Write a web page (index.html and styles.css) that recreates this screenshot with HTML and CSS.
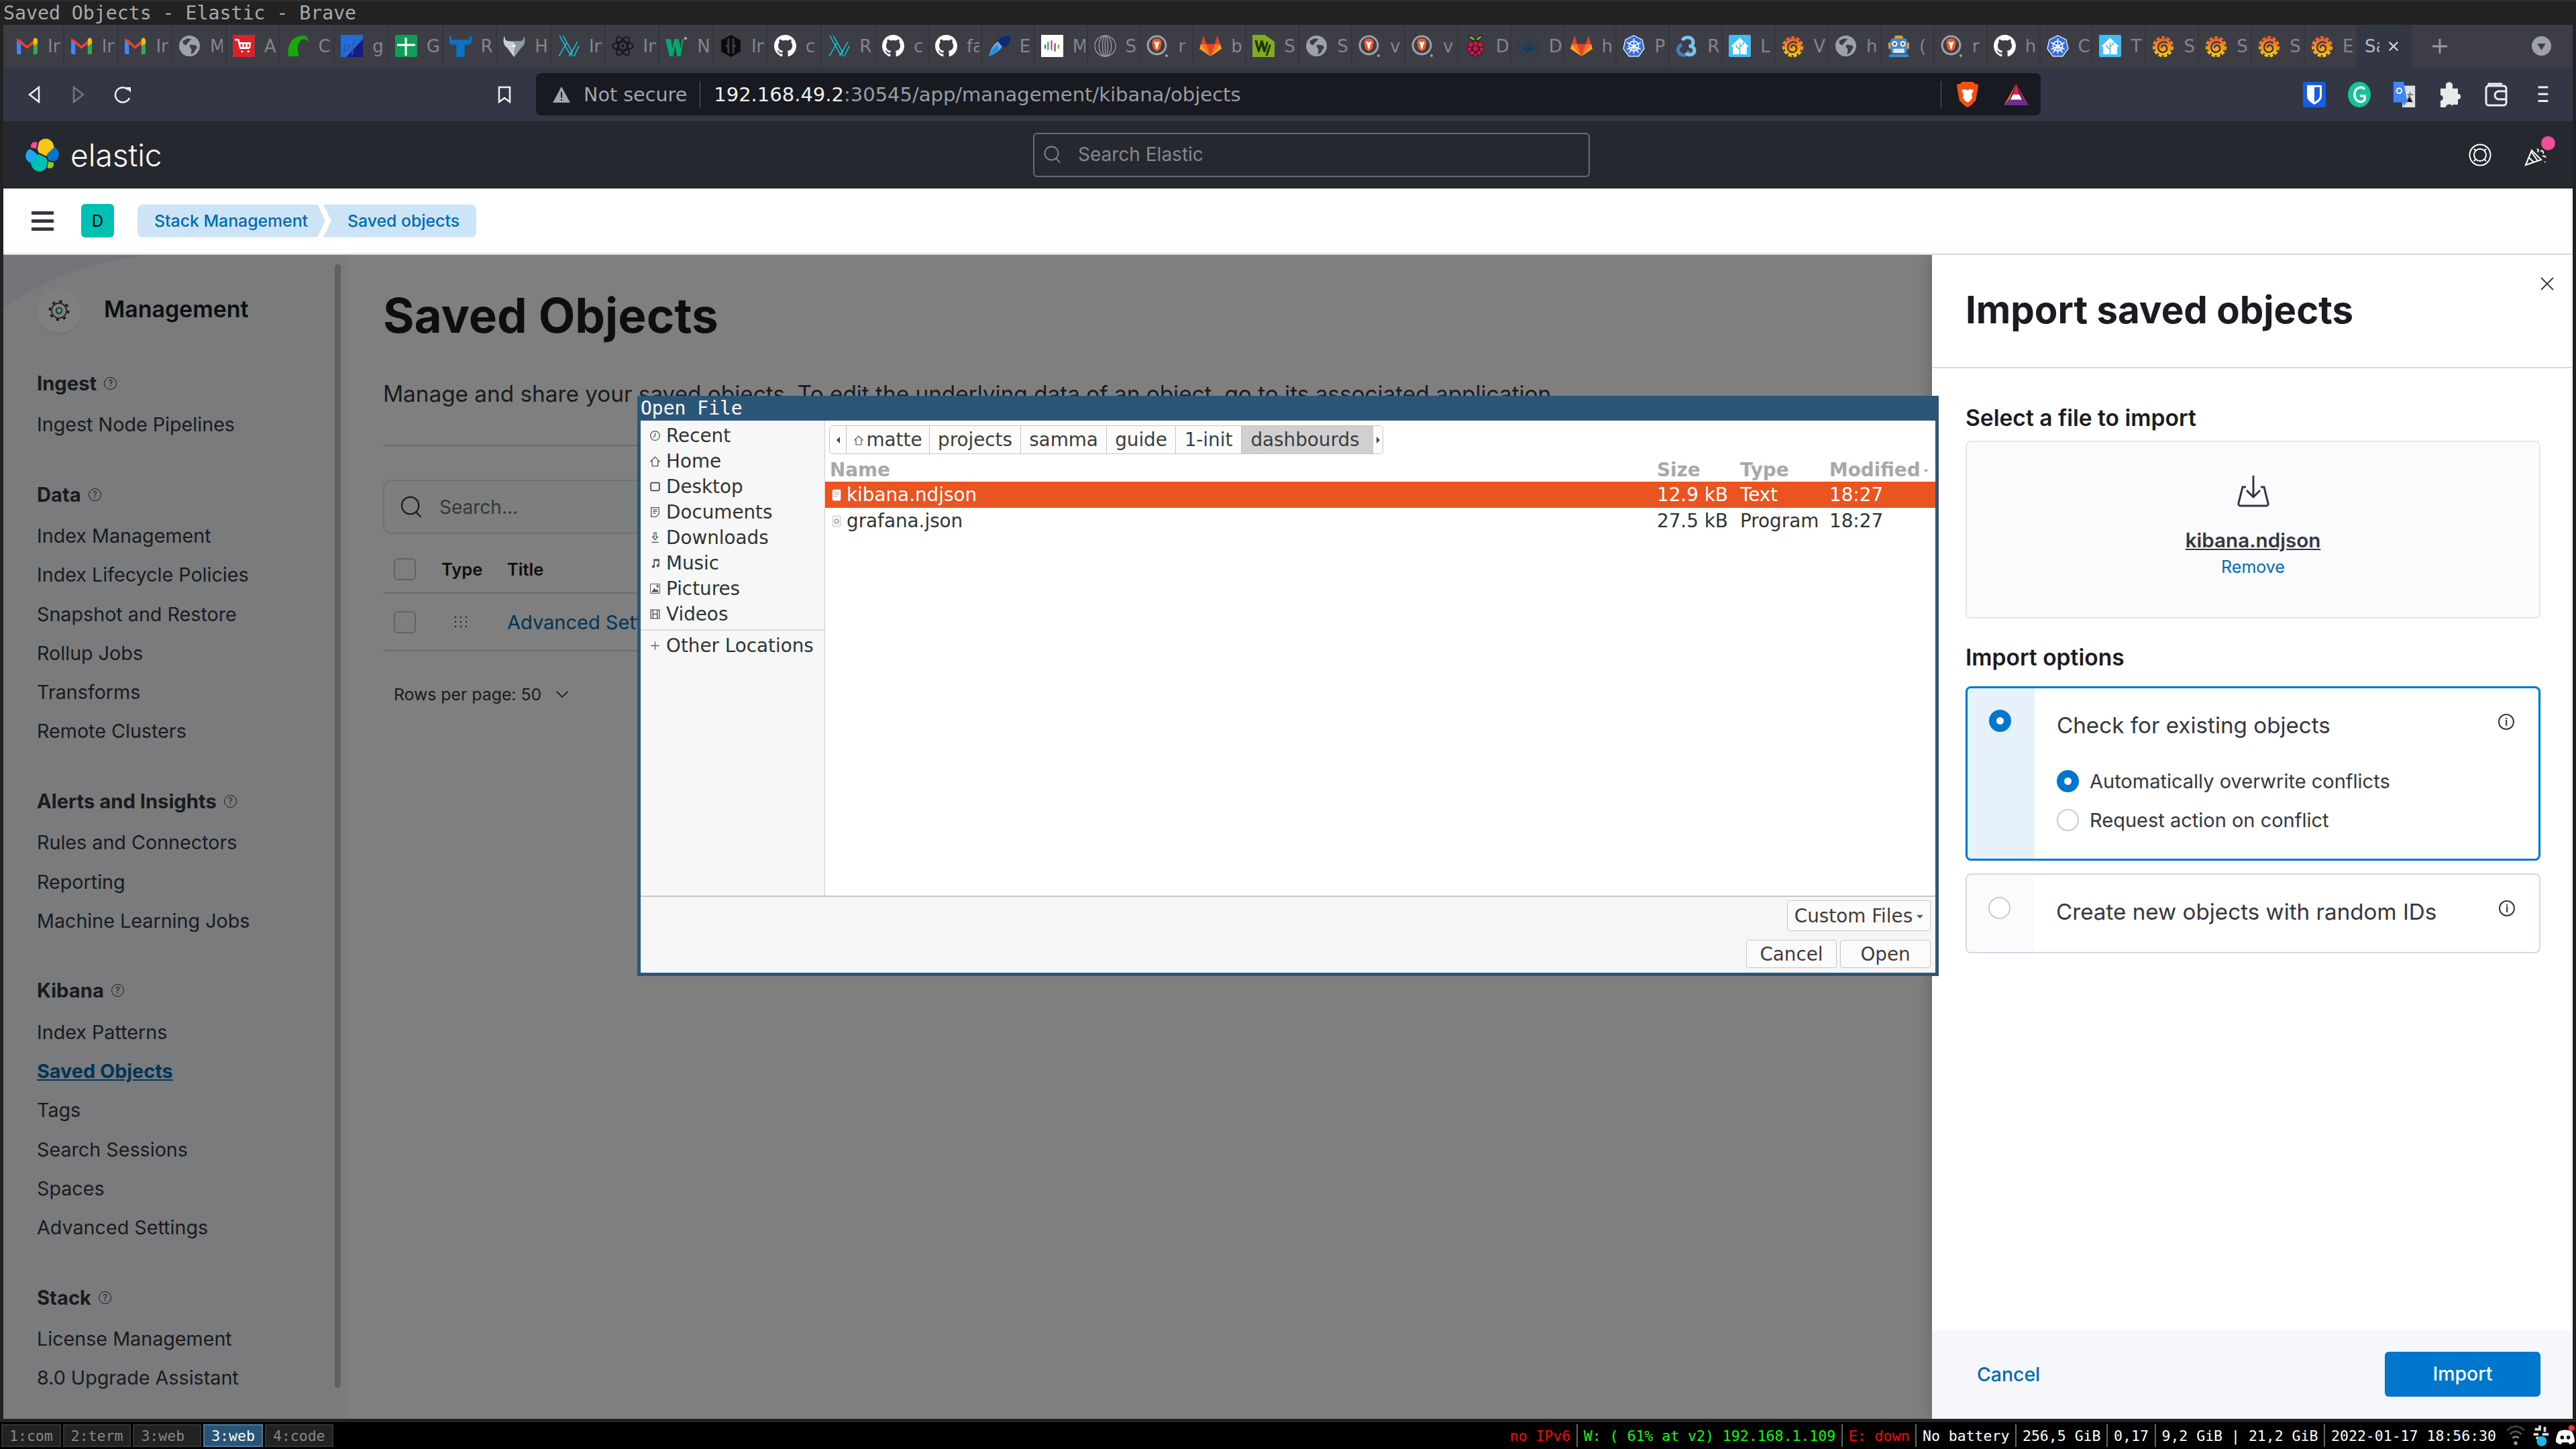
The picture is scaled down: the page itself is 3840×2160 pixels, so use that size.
FILE: index.html
```html
<!DOCTYPE html>
<html lang="en">
<head>
    <meta charset="UTF-8">
    <title>Saved Objects - Elastic - Brave</title>
    <link rel="stylesheet" href="styles.css">
</head>
<body>
<svg class="sprite" xmlns="http://www.w3.org/2000/svg">
    <defs>
        <linearGradient id="grafanaFill" x1="0" y1="0" x2="0" y2="1">
            <stop offset="0" stop-color="#f05a28"/>
            <stop offset="1" stop-color="#fbca0a"/>
        </linearGradient>
    </defs>
    <symbol id="gmail" viewBox="0 0 32 32">
        <path fill="#4285f4" d="M1 8h6v20H3a2 2 0 0 1-2-2z"/>
        <path fill="#34a853" d="M25 8h6v18a2 2 0 0 1-2 2h-4z"/>
        <path fill="#ea4335" d="M1 5l6 3 9 8 9-8 3-4-3 9-9 7-9-7-6-5z"/>
        <path fill="#fbbc04" d="M25 6c2-3 6-2 6 2v4l-6 4z"/>
    </symbol>
    <symbol id="globe" viewBox="0 0 32 32">
        <circle cx="16" cy="16" r="15" fill="#9ea1a8"/>
        <path fill="#3c3d45" d="M6 9l7-4 6 1-5 5-3 4-4-2zM17 14l8 1 2 3-5 8-4 2 1-7-3-4z"/>
    </symbol>
    <symbol id="cart" viewBox="0 0 32 32">
        <rect width="32" height="32" fill="#d8232a"/>
        <path fill="none" stroke="#fff" stroke-width="2.5" d="M3 7h5l3 12h13M9 12h16l-1 7M12 24h3M21 24h3M15 12v7M20 12v7"/>
    </symbol>
    <symbol id="cres" viewBox="0 0 32 32">
        <path fill="#16a80c" d="M3 31C0 15 9 1 24 1c5 0 7 3 8 9-5-5-9-5-12-1-5 6-4 14-2 22z"/>
    </symbol>
    <symbol id="pf" viewBox="0 0 32 32">
        <rect width="32" height="32" fill="#1a1a7e"/>
        <path fill="#1f6fd6" d="M0 0h32v6L8 32H0z"/>
        <text x="3" y="24" font-family="Liberation Serif" font-style="italic" font-size="24" fill="#3a4fb8">pf</text>
    </symbol>
    <symbol id="sheets" viewBox="0 0 32 32">
        <rect width="32" height="32" rx="2" fill="#0f9d58"/>
        <path fill="#fff" d="M14 4h3v9h12v3H17v14h-3V16H3v-3h11z"/>
    </symbol>
    <symbol id="tbar" viewBox="0 0 32 32">
        <path fill="#0d72c2" d="M0 2h3v5h26V2h3v9l-3 3h-7v18H10V14H3l-3-3z"/>
    </symbol>
    <symbol id="wolf" viewBox="0 0 32 32">
        <path fill="#8f9aa0" d="M2 1c0 6 2 8 6 8h16c4 0 6-2 6-8 2 6 2 11-1 15l-3 3-10 13-10-13-3-3C0 12 0 7 2 1z"/>
        <path fill="#c8d0d4" d="M2 1c0 6 2 8 6 8l8 2v21L6 19l-3-3C0 12 0 7 2 1z"/>
        <circle cx="16" cy="16" r="2" fill="#fff"/>
    </symbol>
    <symbol id="kong" viewBox="0 0 32 32">
        <path fill="none" stroke="#16c4d8" stroke-width="1.5" d="M3 1l15 27M8 1l14 25M13 12l-11 19M29 10L17 31M31 16l-7 15M22 31l-3-6"/>
    </symbol>
    <symbol id="atom" viewBox="0 0 32 32">
        <g fill="none" stroke="#0f0f12" stroke-width="1.5">
            <ellipse cx="16" cy="16" rx="15" ry="6"/>
            <ellipse cx="16" cy="16" rx="15" ry="6" transform="rotate(60 16 16)"/>
            <ellipse cx="16" cy="16" rx="15" ry="6" transform="rotate(120 16 16)"/>
        </g>
        <circle cx="16" cy="16" r="2" fill="#0f0f12"/>
    </symbol>
    <symbol id="w3" viewBox="0 0 32 32">
        <path fill="#04aa6d" d="M0 6h8l2 14 3-14h6l3 14 2-14h2l-4 25h-5l-3-15-3 15H6z"/>
        <circle cx="29" cy="5" r="2" fill="#a8adb3"/>
    </symbol>
    <symbol id="hashi" viewBox="0 0 32 32">
        <path fill="#0b0b0e" d="M16 0l14 8v16l-14 8-14-8V8z"/>
        <path fill="#3c3d45" d="M11 6l3-2v24l-3-2v-8H9v-4h2zM18 4l3 2v8h2v4h-2v8l-3 2z"/>
    </symbol>
    <symbol id="github" viewBox="0 0 16 16">
        <path fill="#fff" d="M8 0C3.58 0 0 3.58 0 8c0 3.54 2.29 6.53 5.47 7.59.4.07.55-.17.55-.38 0-.19-.01-.82-.01-1.49-2.01.37-2.53-.49-2.69-.94-.09-.23-.48-.94-.82-1.13-.28-.15-.68-.52-.01-.53.63-.01 1.08.58 1.23.82.72 1.21 1.87.87 2.33.66.07-.52.28-.87.51-1.07-1.78-.2-3.64-.89-3.64-3.95 0-.87.31-1.59.82-2.15-.08-.2-.36-1.02.08-2.12 0 0 .67-.21 2.2.82.64-.18 1.32-.27 2-.27.68 0 1.36.09 2 .27 1.53-1.04 2.2-.82 2.2-.82.44 1.1.16 1.92.08 2.12.51.56.82 1.27.82 2.15 0 3.07-1.87 3.75-3.65 3.95.29.25.54.73.54 1.48 0 1.07-.01 1.93-.01 2.2 0 .21.15.46.55.38A8.013 8.013 0 0016 8c0-4.42-3.58-8-8-8z"/>
    </symbol>
    <symbol id="swoosh" viewBox="0 0 32 32">
        <path fill="#0b2a78" d="M31 1c-12 0-22 8-24 22 7-9 14-8 18-5 6-5 8-11 6-17z"/>
        <path fill="#7aa6e0" d="M15 9C7 14 3 22 1 31c8-3 16-8 19-14-2-3-5-5-5-8z"/>
        <path fill="#1c8fe0" d="M14 14C8 17 3 24 1 31c6-2 13-7 15-11-1-2-2-4-2-6z"/>
    </symbol>
    <symbol id="jipl" viewBox="0 0 32 32">
        <rect width="32" height="32" fill="#fff"/>
        <path fill="#2c5fb8" d="M5 14h2v6H5z"/>
        <path fill="#20a84a" d="M9 10h2v12H9z"/>
        <path fill="#d62d7e" d="M14 8h2v14h-2z"/>
        <path fill="#6b3fa0" d="M19 12h2v12h-2z"/>
        <path fill="#7ab800" d="M24 14h2v6h-2z"/>
    </symbol>
    <symbol id="coil" viewBox="0 0 32 32">
        <g fill="none" stroke="#9ea1a8" stroke-width="1.2">
            <circle cx="16" cy="16" r="15"/>
            <ellipse cx="16" cy="16" rx="9" ry="15"/>
            <ellipse cx="16" cy="16" rx="4" ry="15"/>
            <path d="M16 1v30"/>
        </g>
    </symbol>
    <symbol id="brave" viewBox="0 0 32 32">
        <circle cx="15" cy="15" r="13" fill="none" stroke="#9ea1a8" stroke-width="3"/>
        <path fill="#ef5a2b" d="M15 5l5 1 2 5-2 9-5 4-5-4-2-9 2-5z"/>
        <path fill="#fff" d="M11 10h3l1 2 1-2h3l-2 5-1 5h-2l-1-5z"/>
        <circle cx="29" cy="30" r="2" fill="#9ea1a8"/>
    </symbol>
    <symbol id="gitlab" viewBox="0 0 32 32">
        <path fill="#e24329" d="M16 31L10 13h12z"/>
        <path fill="#fc6d26" d="M16 31L2 13h8zM16 31l14-18h-8z"/>
        <path fill="#fca326" d="M2 13l-2 7 16 11zM30 13l2 7-16 11z"/>
        <path fill="#e24329" d="M2 13L6 1l4 12zM30 13L26 1l-4 12z"/>
    </symbol>
    <symbol id="wh" viewBox="0 0 32 32">
        <path fill="#7fae1c" d="M0 0h18l14 10v22H0z"/>
        <path fill="#26300a" d="M3 8h4l2 10 3-10h3l3 10 2-8h3l-4 15h-3l-3-9-3 9H8zM24 14h3l-5 16h-3z"/>
    </symbol>
    <symbol id="rasp" viewBox="0 0 32 32">
        <path fill="#75a928" stroke="#111" d="M16 9C10 8 7 5 6 1c5 0 9 2 10 8zM16 9c6-1 9-4 10-8-5 0-9 2-10 8z"/>
        <g fill="#c51a4a" stroke="#111" stroke-width=".8">
            <circle cx="16" cy="13" r="4"/><circle cx="9" cy="14" r="4"/><circle cx="23" cy="14" r="4"/>
            <circle cx="7" cy="21" r="3.5"/><circle cx="25" cy="21" r="3.5"/><circle cx="16" cy="20" r="4"/>
            <circle cx="11" cy="26" r="3.5"/><circle cx="21" cy="26" r="3.5"/><circle cx="16" cy="29" r="2.5"/>
        </g>
    </symbol>
    <symbol id="docker" viewBox="0 0 32 32">
        <circle cx="16" cy="16" r="15" fill="none" stroke="#14405f" stroke-width="1"/>
        <path fill="#14405f" d="M6 17h18c2 0 2-3 4-3-1 7-6 11-12 11-5 0-9-3-10-8zM10 13h3v3h-3zM14 13h3v3h-3zM18 13h3v3h-3zM14 9h3v3h-3zM18 5h-1v3h3z"/>
    </symbol>
    <symbol id="k8s" viewBox="0 0 32 32">
        <path fill="#326ce5" stroke="#fff" stroke-width="1.2" d="M16 1l12 6 3 13-8 11H9L1 20 4 7z"/>
        <g fill="none" stroke="#fff" stroke-width="1.6">
            <circle cx="16" cy="16" r="7"/>
            <path d="M16 5v22M6 11l20 10M26 11L6 21M9 26l7-10 7 10"/>
        </g>
    </symbol>
    <symbol id="ring" viewBox="0 0 32 32">
        <g fill="none" stroke-width="5">
            <path stroke="#7ac4ee" d="M10 8c2-6 13-6 15 1 1 4-2 7-6 8"/>
            <path stroke="#3f7fbf" d="M9 14c-6 2-8 10-2 14 5 3 11 0 12-5"/>
            <path stroke="#7ac4ee" d="M21 16c6 1 8 8 4 11-3 3-8 2-10-1"/>
        </g>
    </symbol>
    <symbol id="home" viewBox="0 0 32 32">
        <rect width="32" height="32" rx="2" fill="#41bdf5"/>
        <path fill="#fff" d="M16 4l13 13h-3v11H6V17H3z"/>
        <path fill="none" stroke="#41bdf5" stroke-width="1.5" d="M16 28V11M16 21l-5-4v-3M16 17l5-4v-3"/>
    </symbol>
    <symbol id="grafana" viewBox="0 0 32 32">
        <circle cx="16" cy="17" r="12" fill="url(#grafanaFill)"/>
        <circle cx="16" cy="17" r="13.5" fill="none" stroke="url(#grafanaFill)" stroke-width="3.4" stroke-dasharray="5 2.6"/>
        <path fill="none" stroke="#3c3d45" stroke-width="2.4" d="M22 12c-5-4-12-1-13 5-1 6 5 10 10 7 4-2 3-8-1-9-3-1-5 2-4 4"/>
    </symbol>
    <symbol id="robot" viewBox="0 0 32 32">
        <path fill="#f79b12" d="M11 1h10l2 5H9z"/>
        <rect x="4" y="5" width="24" height="22" rx="4" fill="#3c8dc9"/>
        <rect x="1" y="11" width="3" height="9" fill="#f79b12"/>
        <rect x="28" y="11" width="3" height="9" fill="#f79b12"/>
        <circle cx="10" cy="13" r="4" fill="#fff"/><circle cx="22" cy="13" r="4" fill="#fff"/>
        <circle cx="10" cy="13" r="2" fill="#e0283a"/><circle cx="22" cy="13" r="2" fill="#e0283a"/>
        <rect x="8" y="20" width="16" height="6" fill="#dfe6ea"/>
        <path fill="#3c8dc9" d="M2 28h28v4H2z"/>
    </symbol>
    <symbol id="icoRecent" viewBox="0 0 16 16"><circle cx="8" cy="8" r="6.5" fill="none" stroke="#555" stroke-width="1.2"/><path fill="none" stroke="#555" stroke-width="1.2" d="M8 4v4.5l-3 2"/></symbol>
    <symbol id="icoHome" viewBox="0 0 16 16"><path fill="none" stroke="#555" stroke-width="1.2" d="M2 8l6-6 6 6h-2v7H4V8z"/></symbol>
    <symbol id="icoDesk" viewBox="0 0 16 16"><rect x="2" y="2.5" width="12" height="11" rx="1.5" fill="none" stroke="#444" stroke-width="1.6"/></symbol>
    <symbol id="icoDocs" viewBox="0 0 16 16"><path fill="none" stroke="#555" stroke-width="1.2" d="M2.5 1.5h11v9l-4 4h-7zM5 4.5h6M5 7h6M5 9.5h4"/></symbol>
    <symbol id="icoDown" viewBox="0 0 16 16"><path fill="none" stroke="#555" stroke-width="1.2" d="M6.5 1h3v6h2l-3.5 4L4.500 7h2zM3 14.500h10"/></symbol>
    <symbol id="icoMusic" viewBox="0 0 16 16"><path fill="#555" d="M6 2h8v9.500a2 2 0 1 1-1.500-2V5H7.500v8a2 2 0 1 1-1.500-2z"/></symbol>
    <symbol id="icoPic" viewBox="0 0 16 16"><rect x="1.500" y="1.500" width="13" height="13" fill="#fff" stroke="#555"/><path fill="#555" d="M3 13l4-6 2.500 3 1.500-1.500 2 4.500zM10 3h3v3h-3z"/></symbol>
    <symbol id="icoFilm" viewBox="0 0 16 16"><path fill="none" stroke="#555" stroke-width="1.3" d="M2 2h12v12H2zM5 2v12M11 2v12M5 8h6"/></symbol>
    <symbol id="icoPlus" viewBox="0 0 16 16"><path stroke="#666" stroke-width="1.2" d="M8 2v12M2 8h12"/></symbol>
</svg>

<div class="titlebar">Saved Objects - Elastic - Brave</div>

<div class="browser">
    <div class="tabstrip">
        <div class="tab wide"><svg class="fav"><use href="#gmail"/></svg><span class="tab-label">Inbox</span></div>
        <div class="tab wide"><svg class="fav"><use href="#gmail"/></svg><span class="tab-label">Inbox</span></div>
        <div class="tab wide"><svg class="fav"><use href="#gmail"/></svg><span class="tab-label">Inbox</span></div>
        <div class="tab wide"><svg class="fav"><use href="#globe"/></svg><span class="tab-label">M</span></div>
        <div class="tab wide"><svg class="fav"><use href="#cart"/></svg><span class="tab-label">A</span></div>
        <div class="tab wide"><svg class="fav"><use href="#cres"/></svg><span class="tab-label">C</span></div>
        <div class="tab wide"><svg class="fav"><use href="#pf"/></svg><span class="tab-label">g</span></div>
        <div class="tab wide"><svg class="fav"><use href="#sheets"/></svg><span class="tab-label">G</span></div>
        <div class="tab wide"><svg class="fav"><use href="#tbar"/></svg><span class="tab-label">R</span></div>
        <div class="tab wide"><svg class="fav"><use href="#wolf"/></svg><span class="tab-label">H</span></div>
        <div class="tab wide"><svg class="fav"><use href="#kong"/></svg><span class="tab-label">Inbox</span></div>
        <div class="tab wide"><svg class="fav"><use href="#atom"/></svg><span class="tab-label">Inbox</span></div>
        <div class="tab wide"><svg class="fav"><use href="#w3"/></svg><span class="tab-label">N</span></div>
        <div class="tab wide"><svg class="fav"><use href="#hashi"/></svg><span class="tab-label">Inbox</span></div>
        <div class="tab wide"><svg class="fav"><use href="#github"/></svg><span class="tab-label">c</span></div>
        <div class="tab wide"><svg class="fav"><use href="#kong"/></svg><span class="tab-label">R</span></div>
        <div class="tab"><svg class="fav"><use href="#github"/></svg><span class="tab-label">c</span></div>
        <div class="tab"><svg class="fav"><use href="#github"/></svg><span class="tab-label">fa</span></div>
        <div class="tab"><svg class="fav"><use href="#swoosh"/></svg><span class="tab-label">E</span></div>
        <div class="tab"><svg class="fav"><use href="#jipl"/></svg><span class="tab-label">M</span></div>
        <div class="tab"><svg class="fav"><use href="#coil"/></svg><span class="tab-label">S</span></div>
        <div class="tab"><svg class="fav"><use href="#brave"/></svg><span class="tab-label">r</span></div>
        <div class="tab"><svg class="fav"><use href="#gitlab"/></svg><span class="tab-label">b</span></div>
        <div class="tab"><svg class="fav"><use href="#wh"/></svg><span class="tab-label">S</span></div>
        <div class="tab"><svg class="fav"><use href="#globe"/></svg><span class="tab-label">S</span></div>
        <div class="tab"><svg class="fav"><use href="#brave"/></svg><span class="tab-label">v</span></div>
        <div class="tab"><svg class="fav"><use href="#brave"/></svg><span class="tab-label">v</span></div>
        <div class="tab"><svg class="fav"><use href="#rasp"/></svg><span class="tab-label">D</span></div>
        <div class="tab"><svg class="fav"><use href="#docker"/></svg><span class="tab-label">D</span></div>
        <div class="tab"><svg class="fav"><use href="#gitlab"/></svg><span class="tab-label">h</span></div>
        <div class="tab"><svg class="fav"><use href="#k8s"/></svg><span class="tab-label">P</span></div>
        <div class="tab"><svg class="fav"><use href="#ring"/></svg><span class="tab-label">R</span></div>
        <div class="tab"><svg class="fav"><use href="#home"/></svg><span class="tab-label">L</span></div>
        <div class="tab"><svg class="fav"><use href="#grafana"/></svg><span class="tab-label">V</span></div>
        <div class="tab"><svg class="fav"><use href="#globe"/></svg><span class="tab-label">h</span></div>
        <div class="tab"><svg class="fav"><use href="#robot"/></svg><span class="tab-label">(</span></div>
        <div class="tab"><svg class="fav"><use href="#brave"/></svg><span class="tab-label">r</span></div>
        <div class="tab"><svg class="fav"><use href="#github"/></svg><span class="tab-label">h</span></div>
        <div class="tab"><svg class="fav"><use href="#k8s"/></svg><span class="tab-label">C</span></div>
        <div class="tab"><svg class="fav"><use href="#home"/></svg><span class="tab-label">T</span></div>
        <div class="tab"><svg class="fav"><use href="#grafana"/></svg><span class="tab-label">S</span></div>
        <div class="tab"><svg class="fav"><use href="#grafana"/></svg><span class="tab-label">S</span></div>
        <div class="tab"><svg class="fav"><use href="#grafana"/></svg><span class="tab-label">S</span></div>
        <div class="tab"><svg class="fav"><use href="#grafana"/></svg><span class="tab-label">E</span></div>
        <div class="tab-active">
            <span class="tab-label-active">Saved</span>
            <svg class="tab-close" viewBox="0 0 20 20"><path d="M3 3l14 14M17 3L3 17"/></svg>
        </div>
        <svg class="tab-plus" viewBox="0 0 26 26"><path d="M13 1v24M1 13h24"/></svg>
        <svg class="tab-menu" viewBox="0 0 32 32"><circle cx="16" cy="16" r="16" fill="#9ea1a8"/><path fill="#3c3d45" d="M9 12h14l-7 11z"/></svg>
    </div>

    <div class="toolbar">
        <svg class="tb-back" viewBox="0 0 18 26"><path d="M16 2v22L2 13z"/></svg>
        <svg class="tb-fwd" viewBox="0 0 18 26"><path d="M2 2v22l14-11z"/></svg>
        <svg class="tb-reload" viewBox="0 0 28 26"><path d="M22 6a11 11 0 1 0 2 12"/><path class="solid" d="M18 2h8v8z"/></svg>
        <svg class="tb-mark" viewBox="0 0 20 26"><path d="M2 2h16v22l-8-6-8 6z"/></svg>
        <div class="address">
            <svg class="warn" viewBox="0 0 26 24"><path fill="#a2a4ab" d="M13 0l13 24H0z"/><path fill="#181a21" d="M12 8h2v9h-2zM12 19h2v2h-2z"/></svg>
            <span class="not-secure">Not secure</span>
            <span class="addr-sep"></span>
            <span class="url"><span class="url-host">192.168.49.2</span>:30545/app/management/kibana/objects</span>
            <span class="addr-sep addr-sep-right"></span>
            <svg class="lion" viewBox="0 0 34 38"><path fill="#f1500f" d="M9 0h16l3 3 5 1-1 9-3 15-8 8-4 2-4-2-8-8L2 13 1 4l5-1z"/><path fill="#fff" d="M8 12l6-1 3 2 3-2 6 1-3 7 1 5-5 6h-4l-5-6 1-5z"/></svg>
            <svg class="rewards" viewBox="0 0 38 54" preserveAspectRatio="none"><path fill="#e0224a" d="M19 0l-5 27h10z"/><path fill="#9b2a7a" d="M19 0l19 54-9-14z"/><path fill="#ef5a2b" d="M19 0L0 54l9-14z"/><path fill="#fff" d="M14 27h10l4 13H10z"/><path fill="#6e2d96" d="M10 40h18l10 14H0z"/></svg>
        </div>
        <div class="tb-right">
            <svg class="ext" viewBox="0 0 34 38"><rect width="34" height="38" rx="3" fill="#175ddc"/><path fill="#fff" d="M6 5h22v16c0 6-6 10-11 13C12 31 6 27 6 21z"/><path fill="#175ddc" d="M17 8h8v13c0 4-4 7-8 9z"/></svg>
            <svg class="ext" viewBox="0 0 34 38"><ellipse cx="17" cy="19" rx="17" ry="19" fill="#15c39a"/><path fill="none" stroke="#fff" stroke-width="3.500" d="M25 11c-5-5-15-3-15 8s10 13 15 8v-6h-7"/></svg>
            <svg class="ext" viewBox="0 0 34 40"><rect x="14" y="6" width="20" height="34" fill="#dfe1e5"/><path fill="#4285f4" d="M0 0h16l6 32H0z"/><path fill="#4285f4" d="M14 30h8l-6 8z"/><circle cx="9" cy="14" r="4" fill="none" stroke="#fff" stroke-width="2"/><path stroke="#777" stroke-width="2" d="M22 20h9M26 16v3M30 32l-5-10-4 9"/></svg>
            <svg class="ext" viewBox="0 0 34 38"><path fill="#eaeaea" d="M12 5c0-6 10-6 10 0v5h8v8c6 0 6 8 0 8v8H22v4c0-6-10-6-10 0H4V28c5 0 5-8 0-8V10h8z"/></svg>
            <svg class="ext ext-line" viewBox="0 0 34 38"><rect x="2" y="6" width="30" height="29" rx="4"/><path d="M5 6l1-3h20M32 14H21a4 4 0 0 0 0 12h11"/></svg>
            <svg class="ext ext-menu" viewBox="0 0 24 38"><path d="M2 4h20M2 18h20M2 32h20"/></svg>
        </div>
    </div>

    <div class="kbn-head">
        <svg class="elastic-logo" viewBox="0.5 1.2 31.5 30" preserveAspectRatio="none">
            <path fill="#FEC514" d="M13.032 14.1l7.005 3.192 7.067-6.192a7.89 7.89 0 00.157-1.562c0-4.33-3.523-7.854-7.853-7.854-2.591 0-5.008 1.277-6.476 3.418l-1.176 6.1 1.276 2.898z"/>
            <path fill="#00BFB3" d="M5.78 21.527a7.976 7.976 0 00-.16 1.578c0 4.34 3.531 7.872 7.872 7.872 2.61 0 5.035-1.288 6.5-3.446l1.165-6.08-1.556-2.976-7.034-3.205-6.787 6.257z"/>
            <path fill="#F04E98" d="M5.737 9.535l4.802 1.135 1.051-5.457A3.79 3.79 0 009.32 4.453 3.794 3.794 0 005.53 8.245c0 .45.073.89.207 1.29z"/>
            <path fill="#1BA9F5" d="M5.32 10.68C2.61 11.575.717 14.17.717 17.022c0 2.77 1.715 5.245 4.285 6.22l6.737-6.09-1.237-2.64-6.182-3.832z"/>
            <path fill="#93C90E" d="M20.98 27.44a3.78 3.78 0 002.27.76 3.795 3.795 0 003.79-3.79c0-.45-.077-.89-.21-1.29l-4.797-1.122-1.053 5.442z"/>
            <path fill="#0077CC" d="M21.958 20.7l5.28 1.236c2.71-.897 4.603-3.49 4.603-6.347 0-2.763-1.71-5.235-4.281-6.223l-6.906 6.051 1.304 5.283z"/>
        </svg>
        <span class="elastic-word">elastic</span>
        <div class="global-search">
            <svg class="search-ico" viewBox="0 0 26 26"><circle cx="11.500" cy="11.500" r="10"/><path d="M18 19l6 6"/></svg>
            <span>Search Elastic</span>
        </div>
        <div class="head-right">
            <svg class="head-ico" viewBox="0 0 36 36"><circle cx="18" cy="18" r="15.500"/><circle cx="18" cy="18" r="9"/><path d="M9 9l3 3M27 9l-3 3M9 27l3-3M27 27l-3-3"/></svg>
            <div class="news">
                <svg class="head-ico" viewBox="0 0 36 36"><path d="M2 33l9-22 14 14zM7 22l7 7M11 14l9 13M24 12c3-1 5 1 4 4M19 9c2 1 2 3 1 5M27 20c2-1 4 0 5 2M30 29l1-1"/></svg>
                <span class="news-dot"></span>
            </div>
        </div>
    </div>

    <div class="kbn-nav">
        <div class="burger"><span></span><span></span><span></span></div>
        <div class="space-badge">D</div>
        <div class="crumbs">
            <span class="crumb crumb-first">Stack Management</span>
            <span class="crumb crumb-last">Saved objects</span>
        </div>
    </div>

    <div class="workspace">
        <aside class="side">
            <svg class="side-swoosh" viewBox="0 0 500 100"><path d="M0 80C60 40 120 10 220 0H0z"/></svg>
            <div class="side-head">
                <div class="gear-wrap">
                    <svg class="gear" viewBox="0 0 32 32">
                        <circle cx="16" cy="16" r="10.500" fill="none" stroke="#343741" stroke-width="1.500"/>
                        <circle cx="16" cy="16" r="13" fill="none" stroke="#343741" stroke-width="3" stroke-dasharray="4 6.200"/>
                        <circle cx="16" cy="16" r="4" fill="none" stroke="#017d73" stroke-width="1.800"/>
                    </svg>
                </div>
                <span class="side-title">Management</span>
            </div>
            <div class="group">
                <div class="group-title">Ingest <span class="help">?</span></div>
                <a class="item">Ingest Node Pipelines</a>
            </div>
            <div class="group">
                <div class="group-title">Data <span class="help">?</span></div>
                <a class="item">Index Management</a>
                <a class="item">Index Lifecycle Policies</a>
                <a class="item">Snapshot and Restore</a>
                <a class="item">Rollup Jobs</a>
                <a class="item">Transforms</a>
                <a class="item">Remote Clusters</a>
            </div>
            <div class="group">
                <div class="group-title">Alerts and Insights <span class="help">?</span></div>
                <a class="item">Rules and Connectors</a>
                <a class="item">Reporting</a>
                <a class="item">Machine Learning Jobs</a>
            </div>
            <div class="group">
                <div class="group-title">Kibana <span class="help">?</span></div>
                <a class="item">Index Patterns</a>
                <a class="item item-active">Saved Objects</a>
                <a class="item">Tags</a>
                <a class="item">Search Sessions</a>
                <a class="item">Spaces</a>
                <a class="item">Advanced Settings</a>
            </div>
            <div class="group">
                <div class="group-title">Stack <span class="help">?</span></div>
                <a class="item">License Management</a>
                <a class="item">8.0 Upgrade Assistant</a>
            </div>
            <div class="side-scroll"></div>
        </aside>

        <main class="content">
            <h1 class="page-title">Saved Objects</h1>
            <p class="page-desc">Manage and share your saved objects. To edit the underlying data of an object, go to its associated application.</p>
            <div class="rule"></div>
            <div class="table-search">
                <svg class="search-ico" viewBox="0 0 26 26"><circle cx="11.500" cy="11.500" r="10"/><path d="M18 19l6 6"/></svg>
                <span>Search...</span>
            </div>
            <div class="table-row table-head">
                <span class="check"></span><span>Type</span><span>Title</span>
            </div>
            <div class="table-row table-body">
                <span class="check"></span>
                <svg class="type-ico" viewBox="0 0 20 20"><path d="M1 2h2v2H1zM9 2h2v2H9zM17 2h2v2h-2zM1 9h2v2H1zM9 9h2v2H9zM17 9h2v2h-2zM1 16h2v2H1zM9 16h2v2H9zM17 16h2v2h-2z"/></svg>
                <a class="table-link">Advanced Settings [7.16.3]</a>
            </div>
            <div class="rows-per-page">Rows per page: 50
                <svg class="chev" viewBox="0 0 20 12"><path d="M1 1l9 9 9-9"/></svg>
            </div>
        </main>

        <div class="dim"></div>

        <section class="flyout">
            <svg class="fly-close" viewBox="0 0 20 20"><path d="M1 1l18 18M19 1L1 19"/></svg>
            <header class="fly-head"><h2>Import saved objects</h2></header>
            <div class="fly-body">
                <h3 class="fly-label">Select a file to import</h3>
                <div class="file-box">
                    <svg class="file-ico" viewBox="0 0 50 48"><path d="M14 18H9L3 42a3 3 0 0 0 3 4h38a3 3 0 0 0 3-4l-6-24h-5M25 1v31M15 23l10 10 10-10"/></svg>
                    <span class="file-name">kibana.ndjson</span>
                    <a class="file-remove">Remove</a>
                </div>
                <h3 class="fly-label fly-label-options">Import options</h3>
                <div class="option option-on">
                    <div class="option-side"><span class="radio radio-on"></span></div>
                    <div class="option-main">
                        <div class="option-title"><span>Check for existing objects</span><span class="info">i</span></div>
                        <div class="sub-radio sub-radio-first"><span class="radio radio-on"></span>Automatically overwrite conflicts</div>
                        <div class="sub-radio"><span class="radio"></span>Request action on conflict</div>
                    </div>
                </div>
                <div class="option">
                    <div class="option-side"><span class="radio"></span></div>
                    <div class="option-main">
                        <div class="option-title"><span>Create new objects with random IDs</span><span class="info">i</span></div>
                    </div>
                </div>
            </div>
            <footer class="fly-foot">
                <a class="fly-cancel">Cancel</a>
                <button class="fly-import">Import</button>
            </footer>
        </section>

        <section class="gtk">
            <div class="gtk-title">Open File</div>
            <div class="gtk-main">
                <div class="gtk-side">
                    <div class="place"><svg class="place-ico"><use href="#icoRecent"/></svg>Recent</div>
                    <div class="place"><svg class="place-ico"><use href="#icoHome"/></svg>Home</div>
                    <div class="place"><svg class="place-ico"><use href="#icoDesk"/></svg>Desktop</div>
                    <div class="place"><svg class="place-ico"><use href="#icoDocs"/></svg>Documents</div>
                    <div class="place"><svg class="place-ico"><use href="#icoDown"/></svg>Downloads</div>
                    <div class="place"><svg class="place-ico"><use href="#icoMusic"/></svg>Music</div>
                    <div class="place"><svg class="place-ico"><use href="#icoPic"/></svg>Pictures</div>
                    <div class="place"><svg class="place-ico"><use href="#icoFilm"/></svg>Videos</div>
                    <div class="place place-other"><svg class="place-ico"><use href="#icoPlus"/></svg>Other Locations</div>
                </div>
                <div class="gtk-files">
                    <div class="pathbar">
                        <span class="seg seg-arrow"><i class="arrow-l"></i></span>
                        <span class="seg seg-matte"><svg class="seg-ico"><use href="#icoHome"/></svg>matte</span>
                        <span class="seg seg-projects">projects</span>
                        <span class="seg seg-samma">samma</span>
                        <span class="seg seg-guide">guide</span>
                        <span class="seg seg-init">1-init</span>
                        <span class="seg seg-current">dashbourds</span>
                        <span class="seg seg-end"><i class="arrow-r"></i></span>
                    </div>
                    <div class="file-row file-cols"><span class="col-name">Name</span><span>Size</span><span>Type</span><span>Modified <i class="arrow-d"></i></span></div>
                    <div class="file-row file-selected">
                        <span class="col-name"><svg class="file-mini" viewBox="0 0 14 18"><rect x="1" y="1" width="12" height="16" rx="1.500" fill="#fff" stroke="#e0e0e0"/><path stroke="#aaa" d="M3 5h8M3 8h8M3 11h5"/></svg>kibana.ndjson</span>
                        <span>12.9 kB</span><span>Text</span><span>18:27</span>
                    </div>
                    <div class="file-row">
                        <span class="col-name"><svg class="file-mini" viewBox="0 0 14 18"><rect x="1" y="1" width="12" height="16" rx="1.500" fill="#f2f2f2" stroke="#ccc"/><circle cx="7" cy="9" r="3" fill="none" stroke="#777"/></svg>grafana.json</span>
                        <span>27.5 kB</span><span>Program</span><span>18:27</span>
                    </div>
                </div>
            </div>
            <div class="gtk-foot">
                <div class="gtk-foot-row"><button class="gtk-btn gtk-filter">Custom Files<i class="arrow-d arrow-d-dark"></i></button></div>
                <div class="gtk-foot-row gtk-foot-actions"><button class="gtk-btn">Cancel</button><button class="gtk-btn">Open</button></div>
            </div>
        </section>
    </div>
</div>

<div class="i3bar">
    <div class="workspaces">
        <span class="ws">1:com</span>
        <span class="ws">2:term</span>
        <span class="ws ws-long">3:web</span>
        <span class="ws ws-on">3:web</span>
        <span class="ws">4:code</span>
    </div>
    <div class="status">
        <span class="st-red">no IPv6</span><i class="st-sep"></i>
        <span class="st-green">W: ( 61% at v2) 192.168.1.109</span><i class="st-sep"></i>
        <span class="st-red">E: down</span><i class="st-sep"></i>
        <span>No battery</span><i class="st-sep"></i>
        <span>256,5 GiB</span><i class="st-sep"></i>
        <span>0,17</span><i class="st-sep"></i>
        <span>9,2 GiB | 21,2 GiB</span><i class="st-sep"></i>
        <span>2022-01-17 18:56:30</span>
        <div class="tray">
            <svg class="tray-ico" viewBox="0 0 30 36"><g fill="none" stroke-width="3"><path stroke="#3a3a3a" d="M1 10c8-9 20-9 28 0"/><path stroke="#555" d="M6 16c5-6 13-6 18 0"/><path stroke="#888" d="M10 22c3-3 7-3 10 0"/></g><circle cx="15" cy="30" r="3" fill="#999"/></svg>
            <svg class="tray-ico" viewBox="0 0 30 36"><path stroke="#ddd" stroke-width="4" d="M14 2v8M6 8h8M22 4v8M4 16h8M18 16h10M8 22h6"/><circle cx="17" cy="27" r="8" fill="#1fb6e8"/></svg>
            <svg class="tray-ico" viewBox="0 0 30 36"><path fill="#fff" d="M4 12c6-4 16-4 22 0 3 6 4 11 4 16-3 3-6 4-8 4l-2-3H10l-2 3c-2 0-5-1-8-4 0-5 1-10 4-16z"/><circle cx="10" cy="21" r="3" fill="#000"/><circle cx="20" cy="21" r="3" fill="#000"/><circle cx="25" cy="6" r="5" fill="#e53935"/></svg>
        </div>
    </div>
</div>
</body>
</html>
```

FILE: styles.css
```css
* {
    box-sizing: border-box;
}
html, body {
    margin: 0;
    padding: 0;
}
body {
    width: 3840px;
    height: 2160px;
    overflow: hidden;
    display: flex;
    flex-direction: column;
    background-color: #222222;
    font-family: Inter, "Noto Sans", sans-serif;
    color: #343741;
}
.sprite {
    display: block;
    width: 0;
    height: 0;
}
h1, h2, h3, p {
    margin: 0;
}

/* window title */
.titlebar {
    height: 37px;
    flex: none;
    line-height: 35px;
    padding-left: 5px;
    font-family: "DejaVu Sans Mono", monospace;
    font-size: 28.2px;
    color: #a9a9a9;
    background-color: #222222;
    border-top: 2px solid #2d2d2d;
}
.browser {
    flex: 1;
    min-height: 0;
    margin: 0 5px;
    display: flex;
    flex-direction: column;
}

/* tabs */
.tabstrip {
    height: 63px;
    flex: none;
    display: flex;
    padding-left: 10px;
    background-color: #3c3d45;
    align-items: stretch;
    position: relative;
}
.tab {
    width: 78.9px;
    flex: none;
    display: flex;
    align-items: center;
    padding-left: 9px;
    border-right: 2px solid #36373e;
}
.tab.wide {
    width: 80.7px;
}
.fav {
    width: 33px;
    height: 33px;
    flex: none;
}
.tab-label {
    width: 19px;
    margin-left: 14px;
    overflow: hidden;
    white-space: nowrap;
    font-family: "DejaVu Sans", sans-serif;
    font-size: 26px;
    color: #85868c;
}
.tab-active {
    width: 80px;
    flex: none;
    display: flex;
    align-items: center;
    padding-left: 10px;
    background-color: #333645;
    border-radius: 8px 8px 0 0;
}
.tab-label-active {
    width: 22px;
    overflow: hidden;
    white-space: nowrap;
    font-family: "DejaVu Sans", sans-serif;
    font-size: 26px;
    color: #b7b8bd;
}
.tab-close {
    width: 18px;
    height: 18px;
    margin-left: 12px;
    fill: none;
    stroke: #d8d8da;
    stroke-width: 2.5;
}
.tab-plus {
    width: 24px;
    height: 24px;
    margin: 20px 0 0 30px;
    fill: none;
    stroke: #9a9ba0;
    stroke-width: 3;
}
.tab-menu {
    width: 29px;
    height: 33px;
    margin: 15px 0 0 125px;
}

/* toolbar */
.toolbar {
    height: 81px;
    flex: none;
    display: flex;
    align-items: center;
    padding-left: 37px;
    background-color: #333645;
}
.toolbar svg {
    flex: none;
}
.tb-back, .tb-fwd {
    width: 18px;
    height: 26px;
    fill: none;
    stroke: #f0f0f0;
    stroke-width: 2.5;
}
.tb-fwd {
    margin-left: 48px;
    stroke: #73757f;
}
.tb-reload {
    width: 28px;
    height: 26px;
    margin-left: 43px;
    fill: none;
    stroke: #f0f0f0;
    stroke-width: 2.5;
}
.tb-reload .solid {
    fill: #f0f0f0;
    stroke: none;
}
.tb-mark {
    width: 20px;
    height: 26px;
    margin-left: 545px;
    fill: none;
    stroke: #f0f0f0;
    stroke-width: 2.5;
}
.address {
    width: 2243px;
    height: 63px;
    margin-left: 37px;
    flex: none;
    display: flex;
    align-items: center;
    padding-left: 25px;
    border-radius: 8px;
    background-color: #181a21;
    font-family: "DejaVu Sans", sans-serif;
    font-size: 28.6px;
}
.warn {
    width: 26px;
    height: 24px;
}
.not-secure {
    margin-left: 20px;
    color: #a2a4ab;
}
.addr-sep {
    width: 1px;
    height: 40px;
    margin: 0 20px 0 19px;
    background-color: #5c5e66;
}
.url {
    font-size: 29px;
    color: #9a9ca3;
}
.url-host {
    color: #f1f1f1;
}
.addr-sep-right {
    margin: 0 0 0 auto;
}
.lion {
    width: 34px;
    height: 38px;
    margin-left: 22px;
}
.rewards {
    width: 37px;
    height: 32px;
    margin: 0 18px 0 37px;
}
.tb-right {
    flex: 1;
    display: flex;
    align-items: center;
    padding-left: 391px;
}
.ext {
    width: 34px;
    height: 38px;
    margin-right: 33px;
}
.ext-line, .ext-menu {
    fill: none;
    stroke: #eeeeee;
    stroke-width: 3;
}
.ext-menu {
    width: 20px;
    height: 28px;
    stroke-width: 4;
    margin-left: 10px;
    margin-right: 0;
}
.ext-line {
    margin-left: 3px;
}

/* kibana header */
.kbn-head {
    height: 100px;
    flex: none;
    display: flex;
    align-items: center;
    padding-left: 33px;
    background-color: #25282f;
    position: relative;
}
.elastic-logo {
    width: 50px;
    height: 50px;
    flex: none;
}
.elastic-word {
    width: 1435px;
    margin-left: 17px;
    font-size: 46px;
    font-weight: 300;
    color: #ffffff;
}
.global-search {
    width: 830px;
    height: 66px;
    flex: none;
    display: flex;
    align-items: center;
    padding: 0 0 3px 14px;
    border: 2px solid #6a6c73;
    border-radius: 6px;
    font-size: 28px;
    color: #85878c;
}
.search-ico {
    width: 26px;
    height: 26px;
    flex: none;
    margin-right: 25px;
    fill: none;
    stroke: currentColor;
    stroke-width: 1.8;
}
.head-right {
    flex: 1;
    display: flex;
    align-items: center;
    padding-left: 1309px;
}
.head-ico {
    width: 36px;
    height: 36px;
    flex: none;
    fill: none;
    stroke: #ffffff;
    stroke-width: 2;
}
.news {
    margin-left: 48px;
    position: relative;
    display: flex;
}
.news-dot {
    position: absolute;
    top: -10px;
    right: -10px;
    width: 21px;
    height: 21px;
    border-radius: 50%;
    background-color: #f04e98;
}

/* kibana breadcrumbs */
.kbn-nav {
    height: 99px;
    flex: none;
    display: flex;
    align-items: center;
    background-color: #ffffff;
    border-bottom: 2px solid #d3dae6;
    padding: 0 0 1px 42px;
}
.burger {
    width: 33px;
    display: flex;
    flex-direction: column;
    gap: 7px;
}
.burger span {
    height: 5px;
    background-color: #343741;
}
.space-badge {
    width: 49px;
    height: 50px;
    margin-left: 41px;
    display: flex;
    align-items: center;
    justify-content: center;
    border-radius: 6px;
    background-color: #00bfb3;
    color: #000000;
    font-size: 24px;
}
.crumbs {
    display: flex;
    margin-left: 35px;
}
.crumb {
    height: 49px;
    display: flex;
    align-items: center;
    font-size: 24.8px;
    font-weight: 500;
    color: #006bb4;
    background-color: #cce4f5;
}
.crumb-first {
    width: 280px;
    padding-left: 25px;
    border-radius: 8px 0 0 8px;
    clip-path: polygon(0 0, 268px 0, 100% 50%, 268px 100%, 0 100%);
}
.crumb-last {
    width: 228px;
    margin-left: -3px;
    padding-left: 36px;
    border-radius: 0 8px 8px 0;
    clip-path: polygon(0 0, 100% 0, 100% 100%, 0 100%, 12px 50%);
}

/* page under the overlay */
.workspace {
    flex: 1;
    min-height: 0;
    display: flex;
    position: relative;
    overflow: hidden;
    background-color: #ffffff;
}
.side {
    width: 514px;
    flex: none;
    padding: 50px 0 0 50px;
    background-color: #f5f7fa;
    position: relative;
}
.side-swoosh {
    position: absolute;
    top: 0;
    left: 0;
    width: 500px;
    height: 100px;
    fill: #e6ebf1;
}
.side-scroll {
    position: absolute;
    top: 14px;
    left: 494px;
    width: 9px;
    height: 1675px;
    border-radius: 5px;
    background-color: #bfc1c8;
}
.side-head {
    display: flex;
    align-items: center;
    height: 66px;
    position: relative;
}
.gear-wrap {
    width: 66px;
    height: 66px;
    display: flex;
    align-items: center;
    justify-content: center;
    border-radius: 50%;
    background-color: #ffffff;
    box-shadow: 0 2px 6px rgba(0, 0, 0, 0.08);
}
.gear {
    width: 34px;
    height: 34px;
}
.side-title {
    margin: -6px 0 0 34px;
    font-size: 33.9px;
    font-weight: 600;
    color: #1a1c21;
}
.group {
    margin-top: 55px;
    display: flex;
    flex-direction: column;
}
.group-title {
    height: 40px;
    margin-bottom: 13px;
    display: flex;
    align-items: center;
    font-size: 29.2px;
    font-weight: 700;
    color: #343741;
}
.help {
    width: 19px;
    height: 19px;
    margin-left: 11px;
    display: flex;
    align-items: center;
    justify-content: center;
    border: 1px solid #343741;
    border-radius: 50%;
    font-size: 13px;
    font-weight: 400;
    line-height: 1;
}
.item {
    height: 58.2px;
    display: flex;
    align-items: center;
    padding-bottom: 1px;
    font-size: 28.7px;
    color: #343741;
}
.item-active {
    font-weight: 700;
    font-size: 28.8px;
    color: #006bb4;
    text-decoration: underline;
}
.content {
    flex: 1;
    padding: 50px 0 0 52px;
    background-color: #ffffff;
}
.page-title {
    font-size: 71px;
    line-height: 80px;
    font-weight: 700;
    color: #1a1c21;
}
.page-desc {
    margin-top: 53px;
    font-size: 33.3px;
    line-height: 48px;
    color: #343741;
    white-space: nowrap;
}
.rule {
    width: 2260px;
    height: 2px;
    margin-top: 52px;
    background-color: #d3dae6;
}
.table-search {
    width: 2260px;
    height: 81px;
    margin-top: 50px;
    display: flex;
    align-items: center;
    padding-left: 24px;
    border: 2px solid #dfe3ec;
    border-radius: 12px;
    background-color: #fbfcfd;
    font-size: 28px;
    color: #69707d;
}
.table-search .search-ico {
    width: 33px;
    height: 33px;
    color: #343741;
}
.table-row {
    width: 2260px;
    display: grid;
    grid-template-columns: 71px 98px 1fr;
    align-items: center;
    padding-left: 16px;
    border-bottom: 2px solid #d3dae6;
}
.table-head {
    height: 71px;
    margin-top: 18px;
    font-size: 25.5px;
    font-weight: 600;
    color: #1a1c21;
}
.table-body {
    height: 86px;
}
.check {
    width: 33px;
    height: 33px;
    border: 2px solid #c2c6cf;
    border-radius: 6px;
    background-color: #ffffff;
}
.type-ico {
    width: 20px;
    height: 20px;
    margin-left: 19px;
    fill: #343741;
}
.table-link {
    font-size: 29px;
    color: #006bb4;
    white-space: nowrap;
}
.rows-per-page {
    margin: 44px 0 0 16px;
    display: flex;
    align-items: center;
    height: 40px;
    font-size: 24.8px;
    color: #343741;
}
.chev {
    width: 18px;
    height: 11px;
    margin-left: 22px;
    fill: none;
    stroke: #343741;
    stroke-width: 2;
}
.dim {
    position: absolute;
    top: 0;
    right: 0;
    bottom: 0;
    left: 0;
    background-color: rgba(0, 0, 0, 0.5);
}

/* import flyout */
.flyout {
    position: absolute;
    top: 0;
    right: 0;
    bottom: 0;
    width: 955px;
    display: flex;
    flex-direction: column;
    background-color: #ffffff;
    box-shadow: -8px 0 16px rgba(0, 0, 0, 0.12);
}
.fly-close {
    position: absolute;
    top: 33px;
    right: 28px;
    width: 20px;
    height: 20px;
    fill: none;
    stroke: #343741;
    stroke-width: 1.8;
}
.fly-head {
    height: 169px;
    flex: none;
    display: flex;
    align-items: center;
    padding: 0 0 5px 50px;
    border-bottom: 2px solid #d3dae6;
}
.fly-head h2 {
    font-size: 56.4px;
    font-weight: 700;
    color: #1a1c21;
}
.fly-body {
    flex: 1;
    padding: 54px 48px 0 50px;
}
.fly-label {
    height: 40px;
    line-height: 40px;
    font-size: 33.6px;
    font-weight: 600;
    color: #1a1c21;
}
.fly-label-options {
    margin-top: 38px;
}
.file-box {
    height: 265px;
    margin-top: 14px;
    padding-top: 49px;
    display: flex;
    flex-direction: column;
    align-items: center;
    border: 2px solid #e3e6ef;
    border-radius: 8px;
    background-color: #fafbfd;
}
.file-ico {
    width: 50px;
    height: 48px;
    flex: none;
    fill: none;
    stroke: #343741;
    stroke-width: 3;
}
.file-name {
    height: 40px;
    margin-top: 29px;
    line-height: 40px;
    font-size: 29.6px;
    font-weight: 600;
    text-decoration: underline;
    color: #343741;
}
.file-remove {
    line-height: 40px;
    font-size: 25px;
    color: #006bb4;
}
.option {
    min-height: 119px;
    margin-top: 19px;
    display: flex;
    border: 2px solid #d3dae6;
    border-radius: 8px;
    overflow: hidden;
}
.option-on {
    height: 260px;
    margin-top: 23px;
    border: 3px solid #0077cc;
}
.option-side {
    width: 100px;
    flex: none;
    display: flex;
    justify-content: center;
    padding: 33px 3px 0 0;
    background-color: #fafbfd;
}
.option-on .option-side {
    padding-top: 32px;
    background-color: #e6f1fa;
}
.option-main {
    flex: 1;
    padding: 35px 36px 0 33px;
}
.option-title {
    display: flex;
    justify-content: space-between;
    height: 40px;
    line-height: 40px;
    font-size: 33.2px;
    color: #343741;
}
.info {
    width: 24px;
    height: 24px;
    margin-top: 3px;
    display: flex;
    align-items: center;
    justify-content: center;
    border: 2px solid #343741;
    border-radius: 50%;
    font-size: 16px;
    line-height: 1;
    font-weight: 600;
}
.radio {
    width: 33px;
    height: 33px;
    flex: none;
    border: 2px solid #c8cbd1;
    border-radius: 50%;
    background-color: #ffffff;
}
.radio-on {
    border: 11px solid #0077cc;
}
.sub-radio {
    height: 58.5px;
    display: flex;
    align-items: center;
    font-size: 29px;
    color: #343741;
}
.sub-radio .radio {
    margin-right: 16px;
}
.sub-radio-first {
    margin-top: 34px;
}
.fly-foot {
    height: 132px;
    flex: none;
    display: flex;
    align-items: center;
    justify-content: space-between;
    padding: 0 48px 1px 67px;
    background-color: #f5f7fa;
}
.fly-cancel {
    font-size: 28.4px;
    font-weight: 500;
    color: #006bb4;
}
.fly-import {
    width: 232px;
    height: 67px;
    border: none;
    border-radius: 6px;
    background-color: #0077cc;
    color: #ffffff;
    font-family: inherit;
    font-size: 28.4px;
    font-weight: 500;
    padding: 0 0 2px;
}

/* GTK file chooser */
.gtk {
    position: absolute;
    top: 210px;
    left: 945px;
    width: 1940px;
    height: 865px;
    display: flex;
    flex-direction: column;
    border: 5px solid #2b5678;
    border-top: none;
    background-color: #ffffff;
    font-family: "DejaVu Sans", sans-serif;
    font-size: 27.8px;
    color: #2e3436;
}
.gtk-title {
    height: 37px;
    flex: none;
    margin: 0 -5px;
    padding-left: 5px;
    line-height: 37px;
    background-color: #2b5678;
    font-family: "DejaVu Sans Mono", monospace;
    font-size: 28px;
    color: #ffffff;
}
.gtk-main {
    height: 708px;
    flex: none;
    display: flex;
}
.gtk-side {
    width: 275px;
    flex: none;
    padding-top: 3px;
    background-color: #f7f7f7;
    border-right: 1px solid #cfcfcf;
}
.place {
    height: 38px;
    display: flex;
    align-items: center;
    padding-left: 13px;
}
.place-ico {
    width: 17px;
    height: 17px;
    flex: none;
    margin-right: 8px;
}
.place-other {
    height: 46px;
    margin-top: 4px;
    border-top: 2px solid #dcdcdc;
    padding-top: 1px;
}
.gtk-files {
    flex: 1;
    min-width: 0;
}
.pathbar {
    height: 43px;
    margin: 7px 0 6px 6px;
    display: flex;
    font-size: 27.8px;
    color: #3d3d3d;
}
.seg {
    height: 43px;
    display: flex;
    align-items: center;
    justify-content: center;
    flex: none;
    border: 1px solid #c4c4c4;
    border-left: none;
    background-color: #fcfcfc;
}
.seg-arrow {
    width: 26px;
    border-left: 1px solid #c4c4c4;
    border-radius: 5px 0 0 5px;
}
.seg-matte {
    width: 124px;
}
.seg-projects {
    width: 136px;
}
.seg-samma {
    width: 128px;
}
.seg-guide {
    width: 103px;
}
.seg-init {
    width: 98px;
}
.seg-current {
    width: 196px;
    padding-right: 6px;
    background-color: #d0d0d0;
}
.seg-end {
    width: 15px;
    border-radius: 0 5px 5px 0;
}
.seg-ico {
    width: 16px;
    height: 16px;
    margin-right: 3px;
}
.arrow-l, .arrow-r, .arrow-d {
    display: inline-block;
    width: 0;
    height: 0;
    border-style: solid;
}
.arrow-l {
    border-width: 5px 5px 5px 0;
    border-color: transparent #444444 transparent transparent;
}
.arrow-r {
    border-width: 5px 0 5px 5px;
    border-color: transparent transparent transparent #444444;
}
.arrow-d {
    border-width: 4px 4px 0 4px;
    border-color: #a8a8a8 transparent transparent transparent;
    vertical-align: middle;
    margin-left: -5px;
}
.arrow-d-dark {
    border-color: #555555 transparent transparent transparent;
    border-width: 5px 5px 0 5px;
    margin-left: 6px;
}
.file-row {
    height: 39px;
    display: grid;
    grid-template-columns: 1240px 124px 133px 1fr;
    align-items: center;
    white-space: nowrap;
}
.file-cols {
    height: 35px;
    font-weight: 700;
    color: #a8a8a8;
}
.file-selected {
    background-color: #e95420;
    color: #ffffff;
}
.col-name {
    display: flex;
    align-items: center;
    padding-left: 7px;
}
.file-mini {
    width: 14px;
    height: 18px;
    flex: none;
    margin: 0 8px 0 3px;
}
.gtk-foot {
    flex: 1;
    padding: 5px 7px 0 0;
    background-color: #f6f6f6;
    border-top: 2px solid #c6c6c6;
    display: flex;
    flex-direction: column;
    align-items: flex-end;
}
.gtk-foot-actions {
    margin-top: 13px;
    display: flex;
    gap: 5px;
}
.gtk-btn {
    width: 135px;
    height: 42px;
    border: 1px solid #c7c7c7;
    border-radius: 4px;
    background-color: #fbfbfb;
    font-family: inherit;
    font-size: 27.8px;
    color: #3d3d3d;
    padding: 0;
}
.gtk-filter {
    width: 214px;
    height: 46px;
}

/* i3 bar */
.i3bar {
    height: 40px;
    flex: none;
    margin-top: 5px;
    display: flex;
    justify-content: space-between;
    align-items: center;
    background-color: #000000;
    font-family: "DejaVu Sans Mono", monospace;
    font-size: 21.5px;
}
.workspaces {
    display: flex;
    gap: 3px;
    padding-left: 2px;
}
.ws {
    height: 34px;
    padding: 0 10px;
    display: flex;
    align-items: center;
    border: 2px solid #333333;
    background-color: #222222;
    color: #888888;
}
.ws-long {
    padding-right: 23px;
}
.ws-on {
    border-color: #4c7899;
    background-color: #285577;
    color: #ffffff;
}
.status {
    display: flex;
    align-items: center;
    color: #ffffff;
    white-space: pre;
}
.st-red {
    color: #ff0000;
}
.st-green {
    color: #00ff00;
}
.st-sep {
    width: 2px;
    height: 34px;
    margin: 0 8.8px;
    background-color: #666666;
}
.tray {
    display: flex;
    gap: 9px;
    margin-left: 15px;
    padding-right: 2px;
}
.tray-ico {
    width: 28px;
    height: 34px;
}
```
